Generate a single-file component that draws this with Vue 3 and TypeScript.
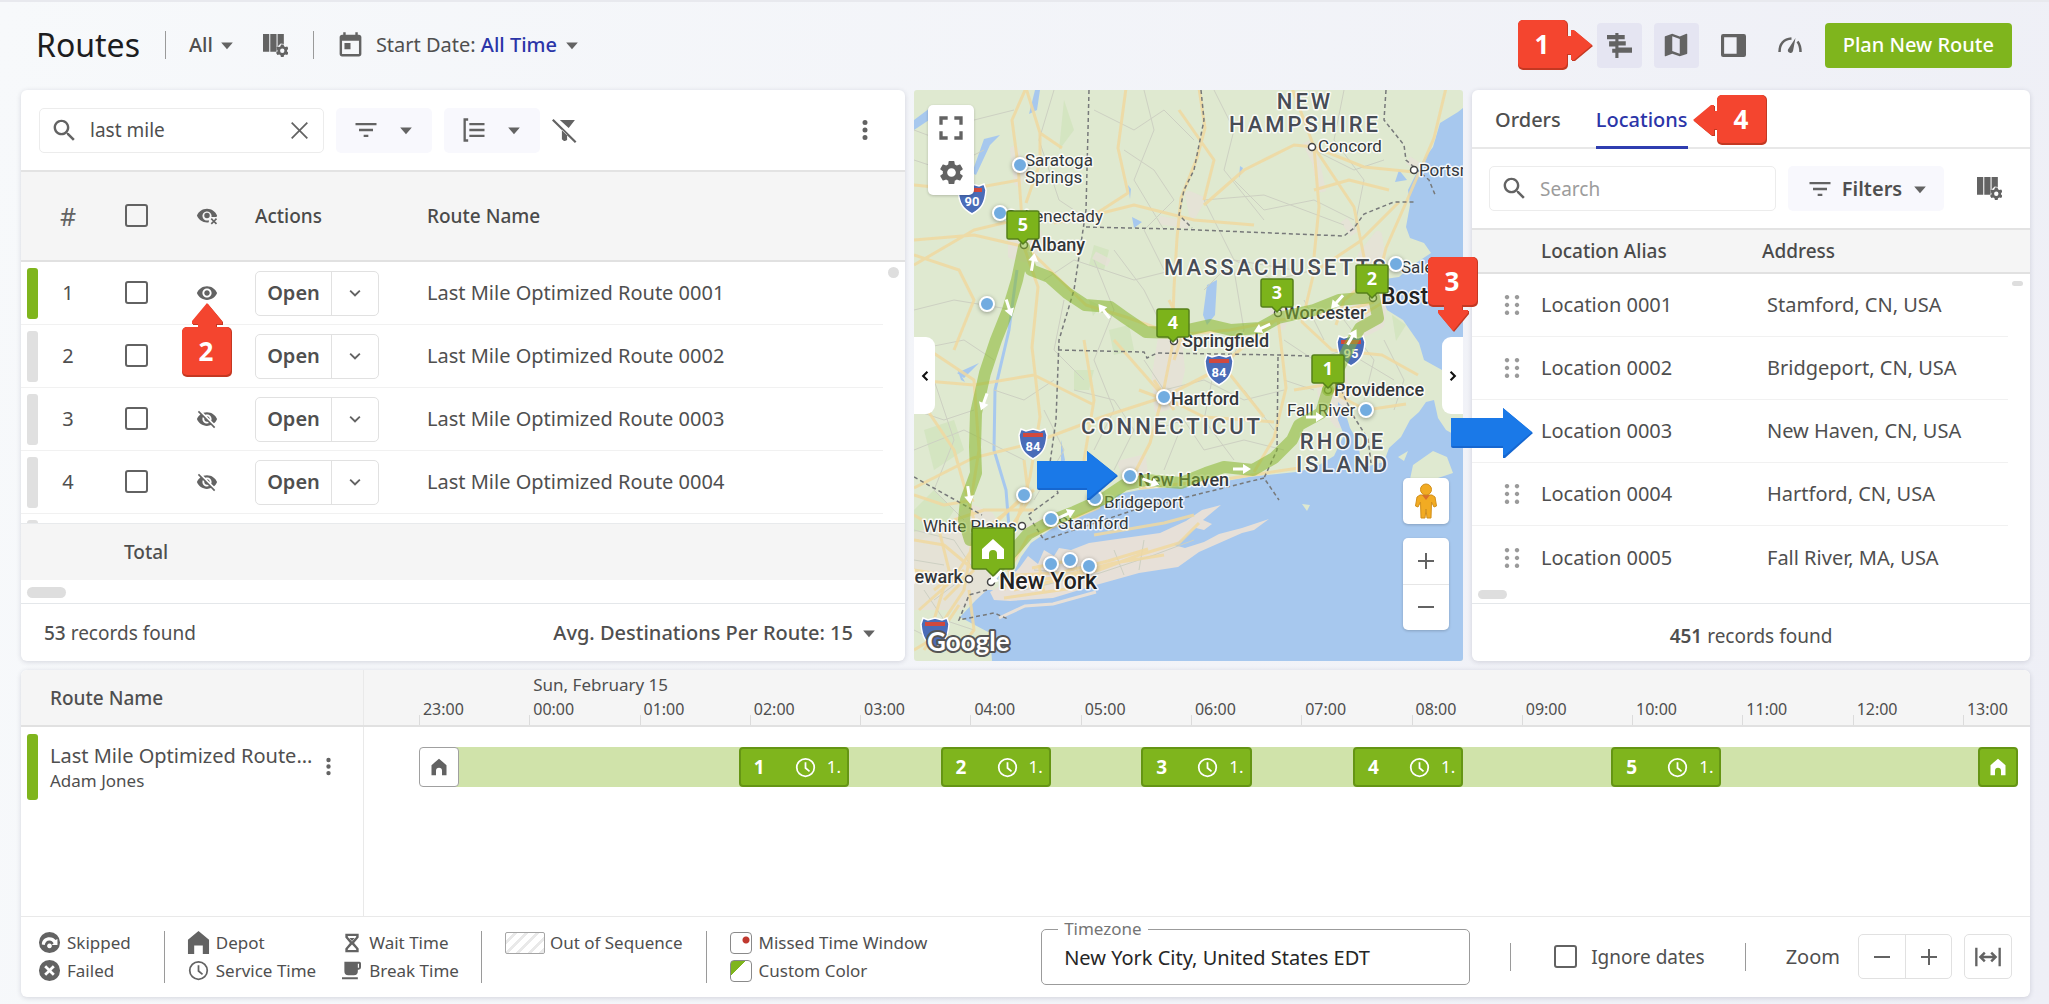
<script setup lang="ts">
import { h, ref } from 'vue'

const paths: Record<string, string> = {
  eye: 'M12 4.5C7 4.5 2.73 7.61 1 12c1.73 4.39 6 7.5 11 7.5s9.27-3.11 11-7.5c-1.73-4.39-6-7.5-11-7.5zM12 17c-2.76 0-5-2.24-5-5s2.24-5 5-5 5 2.24 5 5-2.24 5-5 5zm0-8c-1.66 0-3 1.34-3 3s1.34 3 3 3 3-1.34 3-3-1.34-3-3-3z',
  eyeOff:
    'M12 7c2.76 0 5 2.24 5 5 0 .65-.13 1.26-.36 1.83l2.92 2.92c1.51-1.26 2.7-2.89 3.43-4.75-1.73-4.39-6-7.5-11-7.5-1.4 0-2.74.25-3.98.7l2.16 2.16C10.74 7.13 11.35 7 12 7zM2 4.27l2.28 2.28.46.46C3.08 8.3 1.78 10.02 1 12c1.73 4.39 6 7.5 11 7.5 1.55 0 3.03-.3 4.38-.84l.42.42L19.73 22 21 20.73 3.27 3 2 4.27zM7.53 9.8l1.55 1.55c-.05.21-.08.43-.08.65 0 1.66 1.34 3 3 3 .22 0 .44-.03.65-.08l1.55 1.55c-.67.33-1.41.53-2.2.53-2.76 0-5-2.24-5-5 0-.79.2-1.53.53-2.2zm4.31-.78l3.15 3.15.02-.16c0-1.66-1.34-3-3-3l-.17.01z',
  eyeClear:
    'M12 4C7 4 2.7 7 1 11.5 2.7 16 7 19 12 19c.7 0 1.3 0 2-.2v-2.2a5 5 0 1 1 3-4.9c0 .5 0 .9-.2 1.3h5.600c.2-.500.400-1 .6-1.500C21.300 7 17 4 12 4zm0 4.500a3 3 0 1 0 0 6 3 3 0 0 0 0-6zM16 15.500l1.300-1.300 2.200 2.300 2.200-2.300 1.300 1.300-2.300 2.200 2.300 2.300-1.300 1.300-2.200-2.300-2.200 2.300-1.300-1.300 2.300-2.300z',
  search:
    'M15.5 14h-.79l-.28-.27C15.41 12.59 16 11.11 16 9.5 16 5.91 13.09 3 9.5 3S3 5.91 3 9.5 5.91 16 9.5 16c1.61 0 3.09-.59 4.23-1.57l.27.28v.79l5 4.99L20.49 19l-4.99-5zm-6 0C7.01 14 5 11.99 5 9.5S7.01 5 9.5 5 14 7.01 14 9.5 11.99 14 9.5 14z',
  calendar:
    'M19 3h-1V1h-2v2H8V1H6v2H5c-1.11 0-1.99.9-1.99 2L3 19c0 1.1.89 2 2 2h14c1.1 0 2-.9 2-2V5c0-1.1-.9-2-2-2zm0 16H5V8h14v11zM7 10h5v5H7z',
  gear: 'M19.14 12.94c.04-.3.06-.61.06-.94 0-.32-.02-.64-.07-.94l2.03-1.58c.18-.14.23-.41.12-.61l-1.92-3.32c-.12-.22-.37-.29-.59-.22l-2.39.96c-.5-.38-1.03-.7-1.62-.94l-.36-2.54c-.04-.24-.24-.41-.48-.41h-3.84c-.24 0-.43.17-.47.41l-.36 2.54c-.59.24-1.13.57-1.62.94l-2.39-.96c-.22-.08-.47 0-.59.22L2.74 8.87c-.12.21-.08.47.12.61l2.03 1.58c-.05.3-.09.63-.09.94s.02.64.07.94l-2.03 1.58c-.18.14-.23.41-.12.61l1.92 3.32c.12.22.37.29.59.22l2.39-.96c.5.38 1.03.7 1.62.94l.36 2.54c.05.24.24.41.48.41h3.84c.24 0 .44-.17.47-.41l.36-2.54c.59-.24 1.13-.56 1.62-.94l2.39.96c.22.08.47 0 .59-.22l1.92-3.32c.12-.22.07-.47-.12-.61l-2.01-1.58zM12 15.6c-1.98 0-3.6-1.62-3.6-3.6s1.62-3.6 3.6-3.6 3.6 1.62 3.6 3.6-1.62 3.6-3.6 3.6z',
  map: 'M20.5 3l-.16.03L15 5.1 9 3 3.36 4.9c-.21.07-.36.25-.36.48V20.5c0 .28.22.5.5.5l.16-.03L9 18.9l6 2.1 5.64-1.9c.21-.07.36-.25.36-.48V3.5c0-.28-.22-.5-.5-.5zM15 19l-6-2.11V5l6 2.11V19z',
  filter: 'M10 18h4v-2h-4v2zM3 6v2h18V6H3zm3 7h12v-2H6v2z',
  group: 'M3 2h4v2H5v16h2v2H3zM8 6h13v2H8zM8 11h13v2H8zM8 16h13v2H8z',
  filterOff: 'M7.500 2H22l-6 7.500zM9.500 11l5 5V21l-2 1h-1l-2-1.500zM1.500 1L0 2.500 22 24l1.500-1.500z',
  close: 'M19.500 5.600L18.400 4.500 12 10.900 5.600 4.500 4.500 5.600 10.900 12 4.500 18.400l1.100 1.100 6.400-6.400 6.400 6.400 1.100-1.100L13.100 12z',
  caret: 'M5 9h14l-7 8z',
  chevron: 'M7.400 8.600L12 13.200l4.600-4.600L18 10l-6 6-6-6z',
  left: 'M15.800 7.800L14 6l-6 6 6 6 1.800-1.800L11.600 12z',
  right: 'M10 6L8.200 7.800l4.200 4.200-4.200 4.200L10 18l6-6z',
  kebab: 'M12 7a2.500 2.500 0 1 0 0-5 2.500 2.500 0 0 0 0 5zm0 7.500a2.500 2.500 0 1 0 0-5 2.500 2.500 0 0 0 0 5zm0 7.500a2.500 2.500 0 1 0 0-5 2.500 2.500 0 0 0 0 5z',
  columns:
    'M0 1h6v17H0zM7 1h6v17H7zM14 1h6v9.500l-3-.5-3 3zM17.200 11h2.600l.4 1.800 1.200.7 1.800-.6 1.300 2.200-1.400 1.300v1.300l1.400 1.300-1.300 2.200-1.800-.6-1.200.7-.4 1.800h-2.600l-.4-1.800-1.200-.7-1.800.6-1.300-2.200 1.400-1.300v-1.300l-1.400-1.300 1.300-2.200 1.800.6 1.200-.7zM18.500 14.900a2.100 2.100 0 1 0 0 4.200 2.100 2.100 0 0 0 0-4.200z',
  gantt: 'M0 2h8V0h3v2h6v4h-6v2h7v4h-7v2h13v5H11v5H8v-5H5v-4h3v-2H2V8h6V6H0z',
  sidebar: 'M2 1h20a2 2 0 0 1 2 2v18a2 2 0 0 1-2 2H2a2 2 0 0 1-2-2V3a2 2 0 0 1 2-2zm1 3v16h12V4z',
  fullscreen: 'M7 14H5v5h5v-2H7v-3zm-2-4h2V7h3V5H5v5zm12 7h-3v2h5v-5h-2v3zM14 5v2h3v3h2V5h-5z',
  home: 'M12 1l10 8.500V23h-6v-6a4 4 0 0 0-8 0v6H2V9.500z',
  depot: 'M12 0l11 9v15h-6.500v-9h-9v9H1V9z',
  drag: 'M7 2a2.200 2.200 0 1 0 .01 0zM17 2a2.200 2.200 0 1 0 .01 0zM7 9.800a2.200 2.200 0 1 0 .01 0zM17 9.800a2.200 2.200 0 1 0 .01 0zM7 17.600a2.200 2.200 0 1 0 .01 0zM17 17.600a2.200 2.200 0 1 0 .01 0z',
  clock: 'M12 1a11 11 0 1 0 0 22 11 11 0 0 0 0-22zm0 2a9 9 0 1 1 0 18 9 9 0 0 1 0-18zM11 6v7l5 4.200 1.200-1.500-4.200-3.600V6z',
  failed: 'M12 1a11 11 0 1 0 0 22 11 11 0 0 0 0-22zM8.500 6.500L12 10l3.500-3.500 2 2L14 12l3.500 3.500-2 2L12 14l-3.500 3.500-2-2L10 12 6.500 8.500z',
  skipped: 'M12 1a11 11 0 1 0 0 22 11 11 0 0 0 0-22zM4 14c0-5 4-7.500 8-7.500 3 0 5 1.300 6.300 3l2-1.200v6.200h-6l2-1.600C15.400 11.300 14 10 12 10c-3 0-4.500 2-5 4.500zM12 13a2.500 2.500 0 1 1-.01 0z',
  hourglass: 'M4 1h16v4.500L14.500 12l5.500 6.500V23H4v-4.500L9.500 12 4 5.500zm3 2.500v1.200l5 5.500 5-5.500V3.500zm5 10.300l-5 5.500v1.200h10v-1.200zM9 6h6l-3 3.500z',
  cup: 'M3 1h19a2 2 0 0 1 2 2v5a3 3 0 0 1-3 3h-1v2a5 5 0 0 1-5 5H8a5 5 0 0 1-5-5zm17 2.500V8.500h1.500v-5zM0 20.500h20V23H0z',
  plus: 'M11 4h2v7h7v2h-7v7h-2v-7H4v-2h7z',
  minus: 'M4 11h16v2H4z',
  fit: 'M1 4h2v16H1zM21 4h2v16h-2zM8.500 7.500L10 9l-2 2h8l-2-2 1.500-1.500L20 12l-4.500 4.500L14 15l2-2H8l2 2-1.500 1.500L4 12z',
}

const Icon = (p: { name: string; size?: number }) =>
  h('svg', { viewBox: '0 0 24 24', width: p.size ?? 24, height: p.size ?? 24, fill: 'currentColor', 'aria-hidden': 'true' }, [
    h('path', { d: paths[p.name], 'fill-rule': 'evenodd' }),
  ])

// Red numbered marker; the angle turns its arrow (0 = right)
const Callout = (p: { n: number; angle: number }) => {
  const arrow = 'M46 16h7v-6h3l18 15-18 15h-3v-6h-7z'
  return h('svg', { width: 50, height: 50, viewBox: '0 0 50 50', overflow: 'visible', 'aria-hidden': 'true' }, [
    h('g', { fill: '#c43822' }, [
      h('rect', { x: 0, y: 0, width: 50, height: 50, rx: 5 }),
      h('path', { d: arrow, transform: `translate(1 1) rotate(${p.angle} 25 25)` }),
    ]),
    h('g', { fill: '#f4452f' }, [
      h('rect', { x: 0, y: 0, width: 49, height: 48, rx: 5 }),
      h('path', { d: arrow, transform: `rotate(${p.angle} 25 25)` }),
    ]),
    h('text', { x: 24, y: 34, fill: '#fff', 'font-size': 26, 'font-weight': 700, 'text-anchor': 'middle' }, String(p.n)),
  ])
}

const query = ref('last mile')
const locationQuery = ref('')
const timezone = ref('New York City, United States EDT')

const routes = [1, 2, 3, 4].map((n) => ({ n, name: `Last Mile Optimized Route 000${n}`, visible: n < 3 }))
const locations = [
  { n: 1, address: 'Stamford, CN, USA' },
  { n: 2, address: 'Bridgeport, CN, USA' },
  { n: 3, address: 'New Haven, CN, USA' },
  { n: 4, address: 'Hartford, CN, USA' },
  { n: 5, address: 'Fall River, MA, USA' },
]

const hours = Array.from({ length: 15 }, (_, i) => `${String((23 + i) % 24).padStart(2, '0')}:00`)
const LEAD = 3.3
const HOUR = 6.62
// start is in hours after 23:00
const stops = [
  { n: 1, start: 2.9 },
  { n: 2, start: 4.73 },
  { n: 3, start: 6.55 },
  { n: 4, start: 8.47 },
  { n: 5, start: 10.81 },
]
const at = (t: number) => `${(LEAD + HOUR * t).toFixed(2)}%`

const minorRoads = [
  'M0 40L40 55 60 30 100 20M0 70l30 10 40-20M140 0l-15 50 20 60 30 20M180 20l40 20 30-20 30 30M210 60l30 20 20 30-30 30 20 40M300 0l20 40-10 40 40 50M320 90l30 30 50-10 40 20M290 110l60-5 80 30M290 110l30 60 60 10M400 60l40 20 30-10M230 0l10 40-20 50 30 50M430 0l-10 50 30 40-10 50',
  'M130 190l30-20 60 20 40-10M0 220l40-10 60 10M0 260l50-10 30 20M150 210l-10 50 30 30M180 170l20 50-20 50 20 50-20 40M200 160l30 40 20 40M290 200l30-30 40 20 40-10M320 180l10 60-20 50M230 270l20 30 40-10 40 20 40-10M300 280l-10 50 30 40M330 300l30 40M160 300l40 10 20 30-20 40',
  'M0 320l30 10 30-10M20 290l20 60-20 50 30 30M0 360l50-20 60 30M80 300l30 10 30-20M130 320l20 40-30 50M240 340l30-10 20 30 40-10 40 10M270 330l-20 50M370 250l30 20 30-10 50 30M390 210l20 40M430 230l30 40-10 40M370 290l30 10M470 250l20 40-10 30M0 440l40 10 20 30-40 30M0 470l30 5M10 500l20 30 30 10M0 540l40 20M120 480l60 5 60-20 40-15M110 500l50-12M200 460l10 25M160 465l5 25M230 450l-5 30',
]
const mainRoads = [
  'M110 157L104 75 98 30 112 -2M112 -2l14 45 22 15M126 43v30l-14 40M0 150l60-5 52 12M0 95l50 5 55-10M0 175l60-35 50-12M0 165l45 15 15 30-20 50',
  'M212 -2l-8 60 10 45-34 22-40 8M180 125l40-10 60 15 60 5M265 20l35 50-10 40M285 -2l6 40-8 30-16 40-4 40 -3 50 -2 60-10 50-12 45-18 35',
  'M290 115l40-35 50-25 20 2 50 20 50 5M378 -2l22 59 5 60-5 50 M400 57l40 60 10 50 10 40M532 -2l-12 50-26 60-22 50-12 48M485 112l-40 40-45 30-12 50 30 28 50 5 36 20M400 100l35-10 40 10',
  'M110 157l14 40-6 60 8 70-10 60-15 50M112 157l60 58 40 12 50 18 54-5 50-10 60-8 34-10M364 228l-62 52-52 27-62 20-69 26-60 15-59 30M364 228l8 70-12 50-20 34M250 307l60-30 40 50M414 300l38 20 40-6M0 250l60 40 5 70-8 50M0 290l60 5 60-10 60 30M170 250l10 60-10 60 10 44M0 300l40 60 20 70M200 250l50 57 40 20 70 5',
  'M40 430l30-10 50 0M0 450l30 5 30 25M20 500l25-20 25-40 50-40M0 480l50 8M30 510l30-30M5 520l45-40M60 440l-10 60-40 60M100 485l44-2 50-12 40-12M100 492l40-4 60-15 50-8M100 500l35-8 50-12 40-15 40-12 20-20M90 508l70-10M125 475l5 28M186 417l-72 30-20 35M70 440l30 30-10 30M225 398l80-8 80-12',
  'M0 405l30 10 30-5M0 425l25 15 10 40-15 50M45 560l15-20-5-40M0 560l25-15 20-30M95 440l20-30-5-40M85 430l25-25M180 445l70-12 30-8M118 478l40-8M255 210l15 30-10 30M225 300l40 15M240 290l20 30M455 190l-25 20-8 25M448 225l25-15M380 300l30-5 20 10',
]
const borders = [
  'M175 0l-3 120-12 80-15 50-3 80-7 50 9 23-30 22 16 25 90-30 130-32 15 22',
  'M172 137l88 2 170 7 10-8 10-14 30-12h22',
  'M287 0l3 30-10 50-10 20-5 25 13 13',
  'M144 260l86 2 3 6 10-5 122 2 55 2 2 22 18 38 14 22 3 24M364 267l-1 93-13 28',
  'M0 387l68 38M472 0l-2 30 20 25 2 15 23 20 7 17M73 500l-18 5-10 25 35-7 14 6',
]
const ways = {
  out: 'M82 480l18-20 14-16 25-14 21-8 29-13 21-14 22-5 35 3 25-10 18-6 29 3 21-12 18-18 7-15 22-12 7-23',
  back: 'M414 300l23-47 9-15 18-10-4-21-35 3-25 10-36 8-18 10-29 2-21-5-36 8-28-1-22-15-14-10-25-2-18-12-18-16-18-7-7-23-7 33-9 30-12 30-11 33-9 40-1 34 1 26-10 27-2 20 6 20',
}
const arrows = [
  [119, 172, -80], [95, 218, 72], [190, 221, -128], [348, 238, 155], [423, 212, 132], [438, 247, -60],
  [70, 312, 110], [55, 405, 82], [153, 424, -25], [237, 392, 20], [328, 379, 0], [401, 327, 0], [82, 487, 130],
]
const dots = [
  [106, 75], [86, 123], [73, 214], [482, 174], [250, 307], [452, 320], [216, 386], [110, 405], [181, 408],
  [137, 429], [137, 474], [156, 470], [175, 476],
]
const pins = [
  { n: 5, x: 109, y: 154 },
  { n: 4, x: 259, y: 252 },
  { n: 3, x: 363, y: 222 },
  { n: 2, x: 458, y: 208 },
  { n: 1, x: 414, y: 298 },
]
const shields = [
  { n: '90', x: 58, y: 108 },
  { n: '84', x: 305, y: 279 },
  { n: '95', x: 437, y: 260 },
  { n: '84', x: 119, y: 353 },
  { n: '', x: 21, y: 542 },
]
const rings = [[398, 57], [500, 80], [110, 155], [260, 251], [364, 223], [459, 208], [414, 300], [108, 436], [55, 489], [77, 492]]
const labels = [
  { t: 'NEW', x: 391, y: 19, c: 'state mid' },
  { t: 'HAMPSHIRE', x: 391, y: 42, c: 'state mid' },
  { t: 'MASSACHUSETTS', x: 250, y: 185, c: 'state' },
  { t: 'CONNECTICUT', x: 167, y: 344, c: 'state' },
  { t: 'RHODE', x: 429, y: 359, c: 'state mid' },
  { t: 'ISLAND', x: 429, y: 382, c: 'state mid' },
  { t: 'Concord', x: 404, y: 62, c: 'town' },
  { t: 'Portsmouth', x: 505, y: 86, c: 'town' },
  { t: 'Saratoga', x: 111, y: 76, c: 'town' },
  { t: 'Springs', x: 111, y: 93, c: 'town' },
  { t: 'Schenectady', x: 189, y: 132, c: 'town end' },
  { t: 'Salem', x: 487, y: 183, c: 'town' },
  { t: 'Fall River', x: 373, y: 326, c: 'town' },
  { t: 'Bridgeport', x: 190, y: 418, c: 'town' },
  { t: 'Stamford', x: 144, y: 439, c: 'town' },
  { t: 'White Plains', x: 9, y: 442, c: 'town' },
  { t: 'Albany', x: 116, y: 161, c: 'city' },
  { t: 'Worcester', x: 370, y: 229, c: 'city' },
  { t: 'Springfield', x: 268, y: 257, c: 'city' },
  { t: 'Hartford', x: 257, y: 315, c: 'city' },
  { t: 'Providence', x: 420, y: 306, c: 'city' },
  { t: 'New Haven', x: 224, y: 396, c: 'city' },
  { t: 'Newark', x: 49, y: 493, c: 'city end' },
  { t: 'Boston', x: 467, y: 214, c: 'metro' },
  { t: 'New York', x: 85, y: 499, c: 'metro' },
]
</script>

<template>
  <div class="app">
    <header class="top">
      <h1>Routes</h1>
      <span class="rule r1"></span>
      <button class="plain all">All <Icon name="caret" :size="20" /></button>
      <button class="plain cols" aria-label="Columns"><Icon name="columns" :size="25" /></button>
      <span class="rule"></span>
      <button class="plain date">
        <Icon name="calendar" :size="29" />
        <span class="when">Start Date: <b>All Time</b></span>
        <Icon name="caret" :size="20" />
      </button>
      <nav class="views">
        <button class="view on" aria-label="Timeline"><Callout class="c1" :n="1" :angle="0" /><Icon name="gantt" :size="25" /></button>
        <button class="view on" aria-label="Map"><Icon name="map" :size="30" /></button>
        <button class="view" aria-label="Side panel"><Icon name="sidebar" :size="25" /></button>
        <button class="view" aria-label="Dashboard">
          <svg width="24" height="24" viewBox="0 0 24 24" fill="none" stroke="currentColor" stroke-width="2.500" aria-hidden="true">
            <path d="M1.500 19C1.500 11 6 6 13.500 5.500M19.500 8.500c2 2.500 3 6 3 10.500" />
            <path d="M17.500 5L10 16.500a2.600 2.600 0 1 0 5 1.500z" fill="currentColor" stroke="none" />
          </svg>
        </button>
        <button class="primary">Plan New Route</button>
      </nav>
    </header>

    <main class="panels">
      <section class="card routes">
        <div class="tools">
          <div class="search">
            <Icon name="search" :size="29" />
            <input v-model="query" type="text" aria-label="Search routes" />
            <button class="plain" aria-label="Clear"><Icon name="close" :size="27" /></button>
          </div>
          <button class="soft pair" aria-label="Filter"><Icon name="filter" :size="28" /><Icon name="caret" :size="20" /></button>
          <button class="soft pair" aria-label="Group"><Icon name="group" :size="28" /><Icon name="caret" :size="20" /></button>
          <button class="plain off" aria-label="Clear filters"><Icon name="filterOff" :size="25" /></button>
          <button class="plain more" aria-label="More"><Icon name="kebab" :size="24" /></button>
        </div>
        <div class="grid-clip">
          <table>
            <colgroup>
              <col class="k-bar" /><col class="k-num" /><col class="k-check" /><col class="k-eye" /><col class="k-act" /><col /><col class="k-end" />
            </colgroup>
            <thead>
              <tr>
                <th></th>
                <th class="hash">#</th>
                <th><input type="checkbox" aria-label="Select all routes" /></th>
                <th><Icon name="eyeClear" :size="22" /></th>
                <th class="t-left act">Actions</th>
                <th class="t-left">Route Name</th>
                <th></th>
              </tr>
            </thead>
            <tbody>
              <tr v-for="r in routes" :key="r.n">
                <td><i class="bar" :class="{ live: r.n === 1 }"></i></td>
                <td>{{ r.n }}</td>
                <td><input type="checkbox" :aria-label="`Select ${r.name}`" /></td>
                <td class="eye">
                  <button class="plain" aria-label="Toggle visibility"><Icon :name="r.visible ? 'eye' : 'eyeOff'" :size="22" /></button>
                  <Callout v-if="r.n === 1" class="c2" :n="2" :angle="-90" />
                </td>
                <td class="t-left act">
                  <span class="split">
                    <button class="open">Open</button>
                    <button class="drop" aria-label="More actions"><Icon name="chevron" :size="22" /></button>
                  </span>
                </td>
                <td class="t-left">{{ r.name }}</td>
                <td class="end"></td>
              </tr>
              <tr class="peek">
                <td><i class="bar"></i></td>
                <td colspan="3"></td>
                <td class="t-left act"><span class="split"><i class="open"></i><i class="drop"></i></span></td>
                <td colspan="2"></td>
              </tr>
            </tbody>
          </table>
          <i class="thumb-v"></i>
        </div>
        <div class="total">Total</div>
        <div class="scroll-h"><i></i></div>
        <footer class="foot">
          <span><b>53</b> records found</span>
          <button class="plain avg">Avg. Destinations Per Route: 15 <Icon name="caret" :size="20" /></button>
        </footer>
      </section>

      <section class="map">
        <div class="canvas">
          <svg class="chart" viewBox="0 0 549 571" preserveAspectRatio="xMidYMid slice" role="img" aria-label="Map of routes">
            <rect width="549" height="571" fill="#dfe9d0" />
            <g fill="#cfe2bb" opacity=".7">
              <path d="M180 155l15 5-5 20-15-5zM195 240l20-5 5 25-20 5zM160 280l20 0-5 20-15 0zM0 420l20-20 20 20-15 25-25 5zM150 10l10 30-15 20zM10 340l30-10 10 30-30 20zM175 210l12 6-8 10zM478 225l14 10-10 16z" />
            </g>
            <g fill="#e7e0d8" stroke="#e7e0d8" stroke-width="8" stroke-linejoin="round" opacity=".75">
              <path d="M98 132l16-8 10 20-6 26-20-5zM100 60l8 20-4 12zM448 165l16-20 8 50-6 40-16 8-10-34zM250 235l12-5 5 50-8 34-15 5-2-34zM404 275l20-5 8 30-8 34-15-20zM358 218l14 4-4 14zM0 446l36-8 20-20 20 8 10 20-10 50-30 20-46 0zM208 374l20-5 3 22-14 5zM166 420l24-12M134 432l20-10M112 440l20-10M275 105l12 5-8 14zM180 165l15 8M392 52l10 20 6 30M430 130l10 14M494 70l16 10M245 130l30 5" />
            </g>
            <g fill="#a7c8ee">
              <path d="M549 18L544 22 526 33 519 57 508 72 494 100 496 115 492 137 496 148 510 153 517 163 496 177 485 187 464 190 467 203 473 220 489 230 505 253 510 270 528 280 549 284z" />
              <path d="M549 345L541 345 532 340 524 328 520 310 512 312 505 322 496 330 487 347 475 358 470 372 455 376 447 372 444 352 436 338 430 318 424 312 424 330 430 345 420 366 400 378 382 382 335 387 289 395 246 398 225 400 205 404 185 417 160 430 146 433 130 444 117 453 107 467 100 482 96 490 84 500 73 500 62 510 46 527 57 533 76 543 78 571 549 571z" />
              <path d="M121 0h5l-3 20-8 4zM0 30l20-15-5 15-15 10zM86 45l-10 10-14 30-4-2 12-34zM293 195l10-5-2 35-8 10-4-10zM218 127l10 5-8 6zM485 80l8 10-12 2zM326 76l3 2-4 10zM43 283l22-10-15 15zM147 350l4 20-4 10zM214 95l3 4-1 10zM43 278l8 14-4-2z" />
            </g>
            <path d="M103 180l-8 60-14 60-1 60 12 40 4 50-14 40" fill="none" stroke="#a7c8ee" stroke-width="3" />
            <path d="M499 375l20-14 14 6 6 16-24 8-20 3zM484 367l10-6-4 10zM388 414l8 1-3 6z" fill="#dfe9d0" />
            <path d="M92 492L106 477 114 466 124 474 130 460 140 466 145 458 157 460 175 453 196 450 246 443 272 431 288 420 307 415 289 430 298 434 290 440 282 438 270 448 260 455 271 458 290 452 305 444 328 438 355 429 340 440 328 443 285 462 264 477 225 483 182 495 139 508 96 511 80 510 76 502z" fill="#e7e0d8" />
            <path d="M85 528l26-12 28-2 43-12" fill="none" stroke="#e7e0d8" stroke-width="3" />
            <g fill="none" stroke="#cdd0c2" stroke-width="1"><path v-for="d in minorRoads" :key="d" :d="d" /></g>
            <g fill="none" stroke="#f0d8a0" stroke-width="3" stroke-opacity=".85" stroke-linejoin="round"><path v-for="d in mainRoads" :key="d" :d="d" /></g>
            <g fill="none" stroke="#77797a" stroke-width="1.500" stroke-dasharray="4 3"><path v-for="d in borders" :key="d" :d="d" /></g>
            <g v-for="(s, i) in shields" :key="'s' + i" :transform="`translate(${s.x} ${s.y})`">
              <path d="M-12 -14l5 2 7-2 7 2 5-2 2 6c-1 14-5 19-14 24c-9-5-13-10-14-24z" fill="#4a6cb8" stroke="#fff" stroke-width="1.500" />
              <path d="M-10 -10h20v4h-20z" fill="#d0493f" />
              <text y="8" class="shield">{{ s.n }}</text>
            </g>
            <circle v-for="(r, i) in rings" :key="'r' + i" :cx="r[0]" :cy="r[1]" r="3.500" fill="#fff" stroke="#444" stroke-width="1.500" />
            <text v-for="l in labels" :key="l.t" :x="l.x" :y="l.y" :class="l.c">{{ l.t }}</text>
            <g fill="none" stroke="#86b62c" stroke-opacity=".55" stroke-width="12" stroke-linejoin="round" stroke-linecap="round">
              <path :d="ways.out" />
              <path :d="ways.back" />
            </g>
            <path v-for="(a, i) in arrows" :key="'a' + i" d="M-9 -1.500H1V-5L9 0 1 5V1.500H-9z" fill="#fff" :transform="`translate(${a[0]} ${a[1]}) rotate(${a[2]})`" />
            <circle v-for="(d, i) in dots" :key="'d' + i" :cx="d[0]" :cy="d[1]" r="7" fill="#72ace0" stroke="#fff" stroke-width="2" class="dot" />
            <g v-for="p in pins" :key="'p' + p.n" :transform="`translate(${p.x} ${p.y})`">
              <path d="M-14 -33H14a2 2 0 0 1 2 2V-7a2 2 0 0 1-2 2H5L0 0-5 -5H-14a2 2 0 0 1-2-2V-31a2 2 0 0 1 2-2z" fill="#7cb31b" stroke="#55801a" stroke-width="1.500" />
              <text y="-13" class="pin">{{ p.n }}</text>
            </g>
            <g transform="translate(79 486)">
              <path d="M-19 -48H19a2 2 0 0 1 2 2V-9a2 2 0 0 1-2 2H7L0 0-7 -7H-19a2 2 0 0 1-2-2V-46a2 2 0 0 1 2-2z" fill="#7cb31b" stroke="#55801a" stroke-width="1.500" />
              <path d="M0 -37L11 -27V-17H4V-22a4 4 0 0 0-8 0V-17H-11V-27z" fill="#fff" />
            </g>
            <path d="M123 371h50V361l31 25-28 24h-3V400H125a2 2 0 0 1-2-2z" fill="#1667d0" />
            <path d="M123 371h50V361l30 24-28 23h-2V398H123z" fill="#1a79e8" />
            <text x="13" y="561" class="google">Google</text>
          </svg>
          <div class="box tl">
            <button class="plain" aria-label="Full screen"><Icon name="fullscreen" :size="40" /></button>
            <button class="plain" aria-label="Map settings"><Icon name="gear" :size="29" /></button>
          </div>
          <button class="toggle lt" aria-label="Collapse left"><Icon name="left" :size="20" /></button>
          <button class="toggle rt" aria-label="Collapse right"><Icon name="right" :size="20" /></button>
          <div class="corner">
            <button class="box peg" aria-label="Street View">
              <svg width="22" height="36" viewBox="0 0 22 36" fill="#f2ab22" stroke="#d18f1c" stroke-width="1" aria-hidden="true">
                <path d="M5 12h12l3 2 1.500 9-2.500 1-2.500-5-.5 16h-4l-1-9-1 9H6L5.500 19 3 24l-2.500-1L2 14z" />
                <path d="M7 12l4 5 4-5z" fill="#d9702b" stroke="none" />
                <circle cx="11" cy="6.500" r="5.500" />
              </svg>
            </button>
            <div class="box zoom">
              <button class="plain" aria-label="Zoom in"><Icon name="plus" :size="24" /></button>
              <button class="plain" aria-label="Zoom out"><Icon name="minus" :size="24" /></button>
            </div>
          </div>
        </div>
        <Callout class="c3" :n="3" :angle="90" />
      </section>

      <section class="card places">
        <nav class="tabs">
          <button class="tab">Orders</button>
          <button class="tab on">Locations<Callout class="c4" :n="4" :angle="180" /></button>
        </nav>
        <div class="tools slim">
          <div class="search">
            <Icon name="search" :size="29" />
            <input v-model="locationQuery" type="text" placeholder="Search" aria-label="Search locations" />
          </div>
          <button class="soft filters"><Icon name="filter" :size="28" />Filters<Icon name="caret" :size="20" /></button>
          <button class="plain cog" aria-label="Columns"><Icon name="columns" :size="25" /></button>
        </div>
        <div class="list">
          <table>
            <colgroup><col class="l-drag" /><col class="l-alias" /><col /><col class="k-end" /></colgroup>
            <thead>
              <tr><th></th><th class="t-left">Location Alias</th><th class="t-left">Address</th><th></th></tr>
            </thead>
            <tbody>
              <tr v-for="l in locations" :key="l.n">
                <td class="grip">
                  <Icon v-if="l.n !== 3" name="drag" :size="24" />
                  <svg v-else class="pointer" width="82" height="50" viewBox="0 0 82 50" aria-hidden="true">
                    <path d="M0 10h52V0l30 25-28 25h-2V40H2a2 2 0 0 1-2-2z" fill="#1667d0" />
                    <path d="M0 10h52V0l29 24-27 23h-2V38H0z" fill="#1a79e8" />
                  </svg>
                </td>
                <td class="t-left">Location 000{{ l.n }}</td>
                <td class="t-left addr">{{ l.address }}</td>
                <td class="end"></td>
              </tr>
            </tbody>
          </table>
          <i class="thumb-s"></i>
        </div>
        <div class="scroll-h small"><i></i></div>
        <footer class="foot mid"><span><b>451</b> records found</span></footer>
      </section>
    </main>

    <section class="card timeline">
      <div class="t-row t-head">
        <div class="t-side">Route Name</div>
        <div class="hours">
          <i class="lead" :style="{ flexBasis: LEAD + '%' }"></i>
          <div v-for="x in hours" :key="x" class="hour" :style="{ flexBasis: HOUR + '%' }">
            <span v-if="x === '00:00'" class="day">Sun, February 15</span>
            <span>{{ x }}</span>
          </div>
        </div>
      </div>
      <div class="t-row t-body">
        <div class="t-side route">
          <i class="bar live"></i>
          <div class="who"><p>Last Mile Optimized Route...</p><small>Adam Jones</small></div>
          <button class="plain" aria-label="Route menu"><Icon name="kebab" :size="21" /></button>
        </div>
        <div class="track">
          <i class="travel"></i>
          <span class="stop start"><Icon name="home" :size="18" /></span>
          <span v-for="s in stops" :key="s.n" class="stop" :style="{ left: at(s.start), width: HOUR + '%' }">
            <b>{{ s.n }}</b><Icon name="clock" :size="21" /><em>1.</em>
          </span>
          <span class="stop finish"><Icon name="home" :size="18" /></span>
        </div>
      </div>
      <div class="legend">
        <ul class="g1">
          <li><Icon name="skipped" :size="23" />Skipped</li>
          <li><Icon name="failed" :size="23" />Failed</li>
        </ul>
        <span class="sep"></span>
        <ul class="g2">
          <li><Icon name="depot" :size="23" />Depot</li>
          <li><Icon name="clock" :size="21" />Service Time</li>
        </ul>
        <ul class="g3">
          <li><Icon name="hourglass" :size="20" />Wait Time</li>
          <li><Icon name="cup" :size="19" />Break Time</li>
        </ul>
        <span class="sep"></span>
        <ul class="g4">
          <li><i class="hatch"></i>Out of Sequence</li>
        </ul>
        <span class="sep"></span>
        <ul class="g5">
          <li><i class="chip missed"></i>Missed Time Window</li>
          <li><i class="chip custom"></i>Custom Color</li>
        </ul>
        <fieldset class="zone">
          <legend><label for="tz">Timezone</label></legend>
          <input id="tz" v-model="timezone" type="text" />
        </fieldset>
        <span class="sep short s1"></span>
        <label class="ignore"><input type="checkbox" />Ignore dates</label>
        <span class="sep short s2"></span>
        <span class="z-label">Zoom</span>
        <span class="split z">
          <button aria-label="Zoom timeline out"><Icon name="minus" :size="24" /></button>
          <button aria-label="Zoom timeline in"><Icon name="plus" :size="24" /></button>
        </span>
        <span class="split z"><button aria-label="Fit timeline"><Icon name="fit" :size="28" /></button></span>
      </div>
    </section>
  </div>
</template>

<style>
body {
  margin: 0;
}
</style>

<style scoped>
* {
  box-sizing: border-box;
}
.app {
  min-height: 100vh;
  padding: 0 19px 8px 21px;
  border-top: 2px solid #e8e9ee;
  background: linear-gradient(100deg, #f7f9fb, #eeeff6);
  color: #4f4f4f;
  font: 19px/26px "Noto Sans", "Open Sans", sans-serif;
}
svg {
  display: block;
  flex: none;
}
button,
input {
  font: inherit;
  color: inherit;
}
button {
  display: flex;
  align-items: center;
  justify-content: center;
  padding: 0;
  border: 0;
  background: none;
  white-space: nowrap;
}
.plain > svg,
.soft > svg,
.view > svg,
.split svg,
th svg,
.search svg {
  color: #636363;
}
input[type="checkbox"] {
  appearance: none;
  display: block;
  width: 23px;
  height: 23px;
  margin: 0 auto;
  border: 2px solid #626262;
  border-radius: 3px;
}
table input[type="checkbox"] {
  margin-bottom: 2px;
}
.card {
  background: #fff;
  border-radius: 6px;
  box-shadow: 0 1px 5px rgba(40, 40, 70, 0.16);
}

/* header */
.top {
  display: flex;
  align-items: center;
  height: 88px;
  padding: 0 18px 2px 15px;
  font-size: 20px;
}
h1 {
  margin: 0;
  font-size: 32px;
  line-height: 44px;
  font-weight: 400;
  color: #1d1d1f;
}
.rule {
  width: 1px;
  height: 28px;
  background: #9a9a9a;
}
.r1 {
  margin: 0 23px 0 25px;
}
.all {
  gap: 4px;
  font-weight: 500;
}
.cols {
  margin: 0 25px 0 26px;
}
.date {
  gap: 5px;
  margin-left: 22px;
}
.when {
  margin-left: 6px;
}
.date b {
  font-weight: 500;
  color: #2b35a8;
}
.views {
  display: flex;
  align-items: center;
  gap: 12px;
  margin-left: auto;
}
.view {
  position: relative;
  width: 45px;
  height: 45px;
  border-radius: 4px;
}
.view.on {
  background: #e5e5f2;
}
.primary {
  height: 45px;
  padding: 0 18px;
  border-radius: 4px;
  background: #7fb51d;
  color: #fff;
  font-weight: 500;
}
.c1,
.c2,
.c3,
.c4 {
  position: absolute;
  z-index: 3;
}
.c1 {
  right: 74px;
}
.c2 {
  top: 65px;
  left: 0;
}
.c3 {
  top: 167px;
  right: -15px;
}
.c4 {
  left: calc(100% + 29px);
  top: 5px;
}

/* panels */
.panels {
  display: grid;
  grid-template-columns: 884fr 549fr 558fr;
  gap: 9px;
}
.panels > * {
  display: flex;
  flex-direction: column;
  min-width: 0;
}
.tools {
  display: flex;
  align-items: center;
  gap: 12px;
  height: 82px;
  padding: 0 18px;
  border-bottom: 2px solid #e3e3e3;
}
.search {
  display: flex;
  align-items: center;
  width: 285px;
  height: 45px;
  padding: 0 10px;
  border: 1px solid #ececec;
  border-radius: 5px;
}
.search input {
  flex: 1;
  min-width: 0;
  padding: 0 0 0 11px;
  border: 0;
  outline: 0;
  background: none;
}
.search input::placeholder {
  color: #9c9c9c;
  opacity: 1;
}
.soft {
  height: 45px;
  border-radius: 5px;
  background: #f8f8fd;
}
.pair {
  width: 96px;
  gap: 16px;
}
.more {
  margin-left: auto;
  width: 45px;
}
table {
  width: 100%;
  table-layout: fixed;
  border-collapse: separate;
  border-spacing: 0;
}
th,
td {
  padding: 0;
  text-align: center;
  vertical-align: middle;
}
th {
  height: 90px;
  background: #f5f5f5;
  border-bottom: 2px solid #e1e1e1;
  font-weight: 500;
  color: #4a4a4a;
}
th svg,
td .plain {
  margin: 0 auto;
}
td {
  height: 63px;
  border-bottom: 1px solid #f1f1f1;
  font-size: 20px;
}
td.end {
  border: 0;
}
.t-left {
  text-align: left;
}
.hash {
  font-weight: 400;
  font-size: 25px;
  color: #636363;
}
.k-bar {
  width: 24px;
}
.k-num {
  width: 46px;
}
.k-check {
  width: 91px;
}
.k-eye {
  width: 50px;
}
.k-act {
  width: 195px;
}
.k-end {
  width: 22px;
}
.act {
  padding-left: 23px;
}
.grid-clip {
  position: relative;
  height: 351px;
  overflow: hidden;
}
.bar {
  display: block;
  width: 11px;
  height: 51px;
  margin-left: 6px;
  border-radius: 3px;
  background: #e0e0e0;
}
.bar.live {
  background: #7fb51d;
}
.eye {
  position: relative;
}
.split {
  display: inline-flex;
  height: 45px;
  border: 1px solid #e1e1e1;
  border-radius: 5px;
  background: #fff;
  vertical-align: middle;
}
.split > * + * {
  border-left: 1px solid #e1e1e1;
}
.open {
  width: 75px;
  font-weight: 600;
}
.drop {
  width: 47px;
}
.thumb-v {
  position: absolute;
  top: 95px;
  right: 6px;
  width: 11px;
  height: 11px;
  border-radius: 6px;
  background: #dedede;
}
.total {
  height: 57px;
  padding-left: 103px;
  border-top: 1px solid #e8eaec;
  background: #f5f5f5;
  line-height: 56px;
  font-weight: 500;
}
.scroll-h {
  height: 23px;
  padding: 7px 6px;
}
.scroll-h i {
  display: block;
  width: 39px;
  height: 11px;
  border-radius: 6px;
  background: #dedede;
}
.foot {
  display: flex;
  align-items: center;
  justify-content: space-between;
  height: 58px;
  padding: 0 26px 0 23px;
  border-top: 1px solid #e4e7ea;
}
.foot b {
  font-weight: 500;
}
.avg {
  gap: 6px;
  font-size: 20px;
  font-weight: 500;
}

/* map */
.map {
  position: relative;
  color: #111;
}
.canvas {
  position: relative;
  flex: 1;
  overflow: hidden;
  border-radius: 3px;
}
.chart {
  position: absolute;
  inset: 0;
  width: 100%;
  height: 100%;
}
.chart text {
  font-family: Roboto, "Liberation Sans", sans-serif;
  paint-order: stroke;
  stroke: rgba(255, 255, 255, 0.85);
  stroke-width: 3px;
  stroke-linejoin: round;
  fill: #33373a;
}
.chart .state {
  font-size: 22px;
  font-weight: 500;
  letter-spacing: 3px;
  fill: #474c55;
}
.chart .mid {
  text-anchor: middle;
}
.chart .end {
  text-anchor: end;
}
.chart .town {
  font-size: 17px;
}
.chart .city {
  font-size: 18px;
  font-weight: 500;
}
.chart .metro {
  font-size: 23px;
  font-weight: 500;
  fill: #222;
}
.chart .shield {
  font-size: 13px;
  font-weight: 700;
  text-anchor: middle;
  fill: #fff;
  stroke: none;
}
.chart .pin {
  font-family: "Noto Sans", sans-serif;
  font-size: 18px;
  font-weight: 700;
  text-anchor: middle;
  fill: #fff;
  stroke: none;
}
.chart .google {
  font-family: Lato, sans-serif;
  font-size: 26px;
  font-weight: 700;
  fill: #fff;
  stroke: #555;
  stroke-width: 4px;
}
.dot {
  filter: drop-shadow(0 1px 2px rgba(0, 0, 0, 0.35));
}
.box {
  border-radius: 5px;
  background: #fff;
  box-shadow: 0 1px 3px rgba(0, 0, 0, 0.2);
}
.tl {
  position: absolute;
  top: 15px;
  left: 14px;
  width: 46px;
}
.tl button {
  width: 46px;
  height: 45px;
}
.zoom button {
  width: 46px;
  height: 46px;
}
.corner {
  position: absolute;
  right: 14px;
  bottom: 31px;
  display: grid;
  gap: 14px;
}
.peg {
  width: 46px;
  height: 46px;
}
.zoom button:first-child {
  box-shadow: 0 1px #e6e6e6;
}
.toggle {
  position: absolute;
  top: 247px;
  width: 21px;
  height: 77px;
  background: #fff;
}
.lt {
  left: 0;
  border-radius: 0 9px 9px 0;
}
.rt {
  right: 0;
  border-radius: 9px 0 0 9px;
}

/* locations */
.tabs {
  display: flex;
  gap: 35px;
  height: 59px;
  padding: 0 23px;
  border-bottom: 2px solid #e8e8e8;
}
.tab {
  position: relative;
  height: 59px;
  font-size: 20px;
  font-weight: 500;
}
.tab.on {
  padding-top: 3px;
  color: #2b35a8;
  border-bottom: 3px solid #2f3db0;
}
.slim {
  height: 81px;
  padding: 0 18px 0 17px;
}
.slim .search {
  flex: 1;
}
.filters {
  width: 156px;
  gap: 8px;
  padding-left: 4px;
  font-size: 20px;
  font-weight: 600;
}
.cog {
  width: 45px;
  margin-left: 11px;
}
.list {
  position: relative;
}
.list th {
  height: 44px;
}
.l-drag {
  width: 69px;
}
.l-alias {
  width: 221px;
}
.addr {
  padding-left: 5px;
}
.grip {
  position: relative;
  color: #9a9a9a;
}
.grip > svg {
  margin-left: 28px;
}
.grip > .pointer {
  position: absolute;
  z-index: 3;
  right: 8px;
  top: 8px;
}
.places tbody tr:last-child td {
  border: 0;
}
.thumb-s {
  position: absolute;
  top: 51px;
  right: 7px;
  width: 11px;
  height: 5px;
  border-radius: 3px;
  background: #dedede;
}
.small {
  height: 13px;
  padding: 1px 6px;
}
.small i {
  width: 29px;
  height: 9px;
}
.mid {
  justify-content: center;
  margin-top: auto;
  padding: 6px 0 0;
}
.foot.mid b {
  font-weight: 600;
}

/* timeline */
.timeline {
  margin-top: 9px;
}
.t-row {
  display: flex;
}
.t-side {
  flex: none;
  width: 343px;
  padding-left: 29px;
  border-right: 1px solid #e9e9e9;
}
.t-head {
  height: 57px;
  background: #f5f5f5;
  border-bottom: 2px solid #e1e1e1;
  border-radius: 6px 6px 0 0;
}
.t-head .t-side {
  line-height: 56px;
  font-weight: 500;
}
.hours {
  flex: 1;
  display: flex;
  align-items: flex-end;
  min-width: 0;
  overflow: hidden;
  font-size: 16px;
  line-height: 24px;
}
.lead {
  flex: none;
}
.hour {
  flex: none;
  min-width: 0;
  padding: 0 0 4px 4px;
  white-space: nowrap;
  background: linear-gradient(#dcdcdc, #dcdcdc) left bottom / 1px 10px no-repeat;
}
.hour span {
  display: block;
}
.hour .day {
  font-size: 17px;
}
.t-body {
  height: 189px;
}
.route {
  display: flex;
  align-items: flex-start;
  padding: 7px 24px 0 0;
}
.route .bar {
  height: 66px;
}
.who {
  flex: 1;
  padding: 9px 0 0 12px;
  white-space: nowrap;
}
.who p {
  margin: 0;
  font-size: 20px;
}
.who small {
  display: block;
  font-size: 17px;
  line-height: 24px;
}
.route .plain {
  margin-top: 22px;
}
.track {
  position: relative;
  flex: 1;
}
.travel {
  position: absolute;
  top: 20px;
  left: 4%;
  right: 2%;
  height: 40px;
  background: #d0e3aa;
}
.stop {
  position: absolute;
  top: 20px;
  display: flex;
  align-items: center;
  height: 40px;
  padding: 0 6px 0 13px;
  overflow: hidden;
  border: 2px solid #659514;
  border-radius: 4px;
  background: #7fb51d;
  color: #fff;
  line-height: 36px;
}
.stop b {
  flex: 1;
}
.stop em {
  margin-left: 11px;
  font-size: 17px;
  font-style: normal;
}
.start,
.finish {
  justify-content: center;
  width: 40px;
  padding: 0;
}
.start {
  left: 3.3%;
  border: 1px solid #a0a0a0;
  background: #fff;
  color: #626262;
}
.finish {
  right: 12px;
}

/* legend */
.legend {
  display: flex;
  align-items: center;
  height: 81px;
  padding: 0 18px 1px 16px;
  border-top: 1px solid #e9e9e9;
  font-size: 17px;
  white-space: nowrap;
}
ul {
  display: grid;
  grid-auto-rows: 28px;
  height: 56px;
  margin: 0;
  padding: 0;
  list-style: none;
}
li {
  display: grid;
  grid-template-columns: 25px auto;
  align-items: center;
  column-gap: 5px;
}
li svg {
  color: #636363;
  justify-self: center;
}
.sep {
  width: 1px;
  height: 52px;
  background: #9a9a9a;
}
.short {
  height: 28px;
}
.g1 {
  margin-right: 33px;
}
.g2 {
  margin: 0 23px 0 21px;
}
.g3 {
  margin-right: 22px;
}
.g4 {
  margin: 0 23px;
}
.g4 li {
  grid-template-columns: 40px auto;
}
.g5 {
  margin-left: 23px;
}
.g5 li {
  grid-template-columns: 24px auto;
}
.hatch {
  height: 22px;
  border: 1px solid #a5a5a5;
  border-radius: 2px;
  background: repeating-linear-gradient(135deg, #fff 0 5px, #e9e9e9 5px 8px);
}
.chip {
  width: 22px;
  height: 22px;
  border: 1px solid #8a8a8a;
  border-radius: 4px;
}
.missed {
  background: radial-gradient(circle at 15px 7px, #c0392f 3px, transparent 4px);
}
.custom {
  background: linear-gradient(135deg, #7fb51d 36%, transparent 37%);
}
.zone {
  width: 429px;
  height: 67px;
  margin: -10px 0 0 auto;
  padding: 0 22px;
  border: 1px solid #9b9b9b;
  border-radius: 5px;
}
.zone legend {
  margin-left: -6px;
  padding: 0 6px;
  line-height: 22px;
  color: #757575;
}
.zone input {
  width: 100%;
  height: 34px;
  padding: 0;
  border: 0;
  outline: 0;
  font-size: 20px;
  color: #262626;
}
.s1 {
  margin: 0 43px 0 40px;
}
.ignore {
  display: flex;
  align-items: center;
  gap: 14px;
  font-size: 19px;
}
.s2 {
  margin: 0 40px;
}
.z-label {
  font-size: 20px;
}
.z {
  margin-left: 12px;
}
.z-label + .z {
  margin-left: 18px;
}
.z button {
  width: 46px;
}
</style>
